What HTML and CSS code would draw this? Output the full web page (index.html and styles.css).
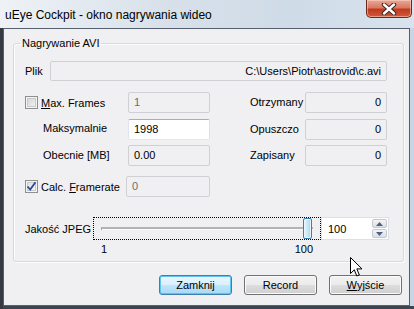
FILE: index.html
```html
<!DOCTYPE html>
<html>
<head>
    <title>uEye Cockpit - okno nagrywania wideo</title>
    <link rel="stylesheet" href="styles.css">
</head>
<body>
<div class="window">
    <div class="titlebar">
        <span class="title">uEye Cockpit - okno nagrywania wideo</span>
        <div class="close">
            <svg width="18" height="12" viewBox="0 0 18 12">
                <path d="M4 1.5 L14 10.5 M14 1.5 L4 10.5" stroke="#3a2420" stroke-width="4.4" stroke-linecap="round"/>
                <path d="M4 1.5 L14 10.5 M14 1.5 L4 10.5" stroke="#fff" stroke-width="2.4" stroke-linecap="round"/>
            </svg>
        </div>
    </div>
    <div class="frame">
        <div class="client">
            <fieldset class="group">
                <legend>Nagrywanie AVI</legend>

                <div class="file-row">
                    <span class="lbl">Plik</span>
                    <div class="field ro path">C:\Users\Piotr\astrovid\c.avi</div>
                </div>

                <!-- counters -->
                <div class="stat-row first">
                    <label class="check">
                        <span class="box"></span>
                        <span><u>M</u>ax. Frames</span>
                    </label>
                    <div class="field off">1</div>
                    <span></span>
                    <span class="rlabel">Otrzymany</span>
                    <div class="field ro num">0</div>
                </div>
                <div class="stat-row second">
                    <span class="sub clip">Maksymalnie [MB]</span>
                    <div class="field edit">1998</div>
                    <span></span>
                    <span class="rlabel wrap">Opuszczone</span>
                    <div class="field ro num">0</div>
                </div>
                <div class="stat-row third">
                    <span class="sub">Obecnie [MB]</span>
                    <div class="field ro">0.00</div>
                    <span></span>
                    <span class="rlabel">Zapisany</span>
                    <div class="field ro num">0</div>
                </div>
                <div class="stat-row fourth">
                    <label class="check">
                        <span class="box checked">
                            <svg width="11" height="11" viewBox="0 0 11 11">
                                <path d="M1.5 5.5 L4.2 8.6 L9.5 1.2" fill="none" stroke="#2a4a9a" stroke-width="1.8"/>
                            </svg>
                        </span>
                        <span>Calc. <u>F</u>ramerate</span>
                    </label>
                    <div class="field off wide">0</div>
                </div>

                <div class="jpeg-row">
                    <span class="lbl jpeg-lbl">Jakość JPEG</span>
                    <div class="slider">
                        <div class="track"></div>
                        <div class="thumb"></div>
                    </div>
                    <div class="spin">
                        <span class="spin-val">100</span>
                        <div class="spin-btns">
                            <div class="spin-btn"><svg width="7" height="4" viewBox="0 0 7 4"><path d="M0 4 L3.5 0 L7 4 Z" fill="#4d6185"/></svg></div>
                            <div class="spin-btn"><svg width="7" height="4" viewBox="0 0 7 4"><path d="M0 0 L3.5 4 L7 0 Z" fill="#4d6185"/></svg></div>
                        </div>
                    </div>
                </div>
                <div class="ticks">
                    <span>1</span>
                    <span>100</span>
                </div>
            </fieldset>

            <div class="buttons">
                <button class="btn default">Zamknij</button>
                <button class="btn">Record</button>
                <button class="btn"><u>W</u>yjście</button>
            </div>
        </div>
    </div>
    <svg class="cursor" width="13" height="21" viewBox="0 0 13 21">
        <path d="M0.5 0.5 L0.5 16.5 L4.3 12.8 L6.8 19 L9.3 18 L6.9 11.9 L12 11.9 Z" fill="#fff" stroke="#000" stroke-width="1"/>
    </svg>
</div>
</body>
</html>
```

FILE: styles.css
```css
body {
    margin: 0;
    font-family: "Liberation Sans", Arial, sans-serif;
    font-size: 11px;
    color: #000;
}
.window {
    position: relative;
    width: 414px;
    height: 309px;
    display: flex;
    flex-direction: column;
    background: linear-gradient(90deg, #eef2f6, #d8e1ea 40%, #cfdbe7 70%, #d8e3ed);
    overflow: hidden;
}
.titlebar {
    height: 28px;
    display: flex;
    align-items: flex-start;
    justify-content: space-between;
}
.title {
    font-size: 12px;
    line-height: 16px;
    margin: 7px 0 0 5px;
    color: #000;
}
.close {
    width: 44px;
    height: 17px;
    margin-right: 2px;
    border: 1px solid #6b2a1e;
    border-top: none;
    border-radius: 0 0 5px 5px;
    background: linear-gradient(180deg, #e9a896 0%, #d97a63 45%, #c3391f 55%, #cf5a3c 100%);
    box-shadow: inset 0 0 0 1px rgba(255, 220, 210, 0.5);
    display: flex;
    align-items: center;
    justify-content: center;
}
.frame {
    flex: 1;
    display: flex;
    padding: 0 4px 3px 3px;
    background: #c6d6e6;
    box-shadow: inset 3px 0 #353a42, inset 0 -3px #3c4552;
}
.client {
    flex: 1;
    border: 1px solid #55606c;
    background: #f0eff2;
    display: flex;
    flex-direction: column;
}
.group {
    margin: 8px 5px 0 9px;
    padding: 0 0 0 11px;
    height: 225px;
    box-sizing: border-box;
    border: 1px solid #d5dbe1;
    border-radius: 3px;
    box-shadow: inset 1px 1px #fbfbfc, 1px 1px #fbfbfc;
    min-width: 0;
}
.group legend {
    margin-left: -5px;
    padding: 0 2px;
    line-height: 13px;
}
.lbl {
    line-height: 20px;
}
.file-row {
    display: flex;
    align-items: center;
    margin-top: 11px;
}
.file-row .lbl {
    width: 25px;
}
.field {
    height: 21px;
    line-height: 19px;
    box-sizing: border-box;
    border: 1px solid #d0d0d4;
    border-radius: 2px;
    padding: 0 5px;
    background: #f0eff2;
    white-space: nowrap;
    overflow: hidden;
}
.path {
    width: 337px;
    height: 20px;
    line-height: 18px;
    text-align: right;
}
.num {
    text-align: right;
}
.off {
    color: #6d6d6d;
}
.edit {
    background: #fff;
    border-color: #abadb3 #dbdfe6 #e3e9ef #e2e3ea;
}
.stat-row {
    display: grid;
    grid-template-columns: 103px 82px 40px 55px 82px;
    align-items: center;
}
.stat-row.first {
    margin-top: 11px;
}
.stat-row.second {
    margin-top: 6px;
}
.stat-row.third {
    margin-top: 5px;
}
.stat-row.fourth {
    margin-top: 10px;
}
.check {
    display: flex;
    align-items: center;
    gap: 3px;
}
.box {
    width: 13px;
    height: 13px;
    box-sizing: border-box;
    border: 1px solid #8e8f8f;
    background: linear-gradient(135deg, #cfd0d2, #f6f6f6);
    box-shadow: inset 0 0 0 1px #f4f4f4, inset 0 0 0 2px #c9cacc;
    display: flex;
    align-items: center;
    justify-content: center;
}
.box.checked {
    background: linear-gradient(135deg, #dadada, #fbfbfb);
}
.sub {
    padding-left: 18px;
    line-height: 13px;
}
.clip {
    height: 15px;
    width: 72px;
    overflow: hidden;
}
.rlabel {
    white-space: nowrap;
    overflow: hidden;
    line-height: 13px;
}
.rlabel.wrap {
    white-space: normal;
    word-break: break-all;
    width: 52px;
    height: 13px;
}
.wide {
    margin-left: -2px;
}
.jpeg-row {
    display: flex;
    align-items: center;
    margin-top: 20px;
}
.jpeg-lbl {
    width: 68px;
}
.slider {
    width: 228px;
    height: 23px;
    box-sizing: border-box;
    border: 1px dotted #000;
    display: flex;
    align-items: center;
    padding-left: 7px;
}
.track {
    width: 212px;
    height: 3px;
    box-sizing: border-box;
    border-top: 2px solid #b3b3b6;
    border-left: 1px solid #a0a0a4;
    background: #fbfbfc;
}
.thumb {
    width: 9px;
    height: 21px;
    margin-left: -10px;
    box-sizing: border-box;
    border: 1px solid #3c7fb1;
    border-radius: 2px;
    background: linear-gradient(90deg, #e5f4fc, #c4e5f6 60%, #98d1ef);
    box-shadow: inset 0 0 0 1px #e9f6fd;
}
.spin {
    width: 68px;
    height: 23px;
    box-sizing: border-box;
    border: 1px solid #dcdfe4;
    background: #fff;
    display: flex;
    align-items: center;
    justify-content: space-between;
    padding: 0 1px 0 6px;
}
.spin-btns {
    display: flex;
    flex-direction: column;
    gap: 1px;
}
.spin-btn {
    width: 15px;
    height: 9px;
    box-sizing: border-box;
    border: 1px solid #c5c9cf;
    border-radius: 2px;
    background: linear-gradient(180deg, #f3f4f6, #dcdfe4);
    display: flex;
    align-items: center;
    justify-content: center;
}
.ticks {
    display: flex;
    justify-content: space-between;
    width: 212px;
    margin: 3px 0 0 76px;
    line-height: 13px;
}
.buttons {
    display: flex;
    justify-content: flex-end;
    gap: 12px;
    margin: 13px 7px 0 0;
}
.btn {
    width: 73px;
    height: 20px;
    padding: 0;
    font-family: inherit;
    font-size: 11px;
    color: #000;
    border: 1px solid #707070;
    border-radius: 3px;
    background: linear-gradient(180deg, #f2f2f2 0%, #ebebeb 50%, #dddddd 51%, #cfcfcf 100%);
    box-shadow: inset 0 0 0 1px #fbfbfb;
}
.btn.default {
    border-color: #3c7fb1;
    background: linear-gradient(180deg, #eaf6fd 0%, #d9f0fc 50%, #bee6fd 51%, #a7d9f5 100%);
    box-shadow: inset 0 0 0 1px #5fc2f0;
}
.cursor {
    position: absolute;
    left: 350px;
    top: 257px;
}
```
